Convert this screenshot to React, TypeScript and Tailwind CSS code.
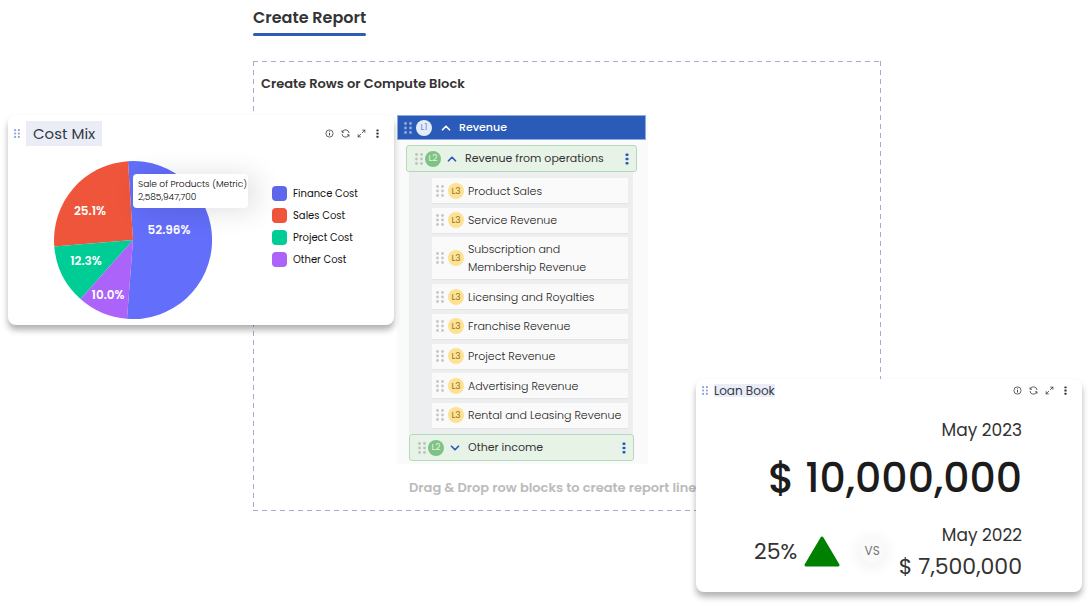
import React from "react";
import { ChevronDown, ChevronUp, Maximize2 } from "lucide-react";

type Slice = {
  name: string;
  swatch: string;
  fill: string;
  path: string;
};

const slices: Slice[] = [
  {
    name: "Finance Cost",
    swatch: "bg-[#5f68ea]",
    fill: "#636efa",
    path: "M79 79 L74 0.2 A79 79 0 1 1 73 157.8 Z",
  },
  {
    name: "Sales Cost",
    swatch: "bg-[#ef553b]",
    fill: "#ef553b",
    path: "M79 79 L0.3 85.5 A79 79 0 0 1 74 0.2 Z",
  },
  {
    name: "Project Cost",
    swatch: "bg-[#00cc96]",
    fill: "#00cc96",
    path: "M79 79 L26.5 138 A79 79 0 0 1 0.3 85.5 Z",
  },
  {
    name: "Other Cost",
    swatch: "bg-[#ab63fa]",
    fill: "#ab63fa",
    path: "M79 79 L73 157.8 A79 79 0 0 1 26.5 138 Z",
  },
];

const pieLabels = [
  { text: "52.96%", x: 115, y: 73 },
  { text: "25.1%", x: 36, y: 54 },
  { text: "12.3%", x: 32, y: 104 },
  { text: "10.0%", x: 54, y: 138 },
];

const operations = [
  "Product Sales",
  "Service Revenue",
  "Subscription and Membership Revenue",
  "Licensing and Royalties",
  "Franchise Revenue",
  "Project Revenue",
  "Advertising Revenue",
  "Rental and Leasing Revenue",
];

function DragDots({ className }: { className: string }) {
  return (
    <svg
      viewBox="0 0 8 12"
      fill="currentColor"
      aria-hidden="true"
      className={`shrink-0 ${className}`}
    >
      {[1.5, 6, 10.5].map((y) => (
        <React.Fragment key={y}>
          <circle cx="1.5" cy={y} r="1.4" />
          <circle cx="6.5" cy={y} r="1.4" />
        </React.Fragment>
      ))}
    </svg>
  );
}

function MoreDots({ className }: { className: string }) {
  return (
    <svg
      viewBox="0 0 4 12"
      fill="currentColor"
      aria-hidden="true"
      className={className}
    >
      <rect x="0.5" y="0.5" width="3" height="2.6" rx="0.8" />
      <rect x="0.5" y="4.7" width="3" height="2.6" rx="0.8" />
      <rect x="0.5" y="8.9" width="3" height="2.6" rx="0.8" />
    </svg>
  );
}

function CardActions() {
  return (
    <div className="flex items-center gap-[7px] text-[#333]">
      <button aria-label="Info">
        <svg viewBox="0 0 18 18" fill="none" className="size-[9px]">
          <circle cx="9" cy="9" r="7.2" stroke="currentColor" strokeWidth="1.5" />
          <path d="M9 8v5M9 4.8v1.7" stroke="currentColor" strokeWidth="1.8" />
        </svg>
      </button>
      <button aria-label="Refresh">
        <svg
          viewBox="0 0 18 18"
          fill="none"
          stroke="currentColor"
          strokeWidth="1.5"
          className="size-[9px]"
        >
          <path d="M2 2.5V6.5H6M2.4 6.3A7 7 0 0 1 16 8.2" />
          <path d="M16 15.5V11.5H12M15.6 11.7A7 7 0 0 1 2 9.8" />
        </svg>
      </button>
      <button aria-label="Expand">
        <Maximize2 className="size-[9px]" strokeWidth={2} />
      </button>
      <button aria-label="More" className="flex w-[9px] justify-center">
        <MoreDots className="h-[9px] w-[3px]" />
      </button>
    </div>
  );
}

function CostMixCard() {
  return (
    <section className="absolute left-2 top-[115px] h-[210px] w-[386px] rounded-lg bg-white pl-[6px] pr-3 pt-[6px] shadow-[0_5px_6px_rgba(0,0,0,0.3)]">
      <header className="flex items-center justify-between">
        <div className="flex items-center gap-[6px]">
          <DragDots className="h-[9px] w-[6px] text-[#8ea0d6]" />
          <h2 className="bg-[#eaedf5] px-[7px] text-[15px] leading-[25px] text-[#333a45]">
            Cost Mix
          </h2>
        </div>
        <CardActions />
      </header>

      <div className="flex pl-10 pt-[15px]">
        <div className="relative">
          <svg
            viewBox="0 0 158 158"
            role="img"
            aria-label="Cost Mix"
            className="size-[158px]"
          >
            {slices.map((slice) => (
              <path key={slice.name} d={slice.path} fill={slice.fill} />
            ))}
            {pieLabels.map((label) => (
              <text
                key={label.text}
                x={label.x}
                y={label.y}
                textAnchor="middle"
                className="fill-white text-[12px] font-semibold"
              >
                {label.text}
              </text>
            ))}
          </svg>
          <div className="absolute left-[79px] top-[13px] w-[115px] whitespace-nowrap rounded-[4px] bg-white px-[5px] py-1 text-[9px] font-light leading-[13px] text-black shadow-[8px_2px_28px_rgba(0,0,0,0.13)]">
            <p>Sale of Products (Metric)</p>
            <p>2,585,947,700</p>
          </div>
        </div>

        <ul className="ml-[60px] mt-[25px] flex flex-col gap-[7px]">
          {slices.map((slice) => (
            <li
              key={slice.name}
              className="flex items-center gap-[6px] text-[10px] leading-[15px] text-[#111]"
            >
              <span className={`size-[15px] rounded-[4px] ${slice.swatch}`} />
              {slice.name}
            </li>
          ))}
        </ul>
      </div>
    </section>
  );
}

function LevelTwoRow({ name, open }: { name: string; open: boolean }) {
  const Chevron = open ? ChevronUp : ChevronDown;

  return (
    <div className="flex h-[27px] items-center rounded-[3px] border border-[#b3d9bd] bg-[#e8f3e8] pl-2 pr-[7px] text-[11px] text-[#333]">
      <DragDots className="h-3 w-2 text-[#bcc3bd]" />
      <span className="ml-[2px] flex size-4 items-center justify-center rounded-full bg-[#7fc384] text-[9px] text-[#e3f5e3]">
        L2
      </span>
      <button
        aria-label={open ? "Collapse" : "Expand"}
        className="ml-1 text-[#2a5bb8]"
      >
        <Chevron className="size-[14px]" strokeWidth={3} />
      </button>
      <span className="ml-[6px] flex-1">{name}</span>
      <button aria-label="More" className="text-[#2a5bb8]">
        <MoreDots className="h-3 w-1" />
      </button>
    </div>
  );
}

function ReportRows() {
  return (
    <div className="ml-[144px] mt-[21px] w-[251px] bg-[#fafafa] pb-[3px]">
      <div className="mr-[2px] flex h-[25px] items-center border border-[#8fabe0] bg-[#2a5bb8] pl-[6px] text-[11px] font-medium text-white">
        <DragDots className="h-3 w-2 text-[#8fabe0]" />
        <span className="ml-1 flex size-4 items-center justify-center rounded-full bg-[#e6edfa] text-[9px] font-normal text-[#6c8fd0]">
          L1
        </span>
        <button aria-label="Collapse" className="ml-[7px]">
          <ChevronUp className="size-[14px]" strokeWidth={3} />
        </button>
        <span className="ml-[6px]">Revenue</span>
      </div>

      <div className="ml-[9px] mr-[11px] mt-[5px]">
        <LevelTwoRow name="Revenue from operations" open />
      </div>

      <div className="ml-3 mr-[15px] bg-[#eceef0] py-[6px] pl-[23px] pr-[5px]">
        <ul className="flex h-[250px] flex-col justify-between">
          {operations.map((name) => (
            <li
              key={name}
              className="flex min-h-[25px] items-center bg-[#fafafa] px-1 py-[3px] text-[11px] font-light leading-[18px] text-[#222] shadow-[0_1px_1px_rgba(0,0,0,0.04)]"
            >
              <DragDots className="h-3 w-2 text-[#c6c6c6]" />
              <span className="ml-1 flex size-4 shrink-0 items-center justify-center rounded-full bg-[#fde293] text-[9px] font-normal text-[#96752a]">
                L3
              </span>
              <span
                className={
                  name.length > 30 ? "ml-1 w-[130px]" : "ml-1 whitespace-nowrap"
                }
              >
                {name}
              </span>
            </li>
          ))}
        </ul>
      </div>

      <div className="ml-3 mr-[14px]">
        <LevelTwoRow name="Other income" open={false} />
      </div>
    </div>
  );
}

function LoanBookCard() {
  return (
    <section className="absolute right-[9px] top-[379px] h-[213px] w-[386px] rounded-lg bg-white pl-[6px] pr-3 pt-[5px] text-[#333] shadow-[0_5px_6px_rgba(0,0,0,0.3)]">
      <header className="flex items-center justify-between">
        <div className="flex items-center gap-[6px]">
          <DragDots className="h-[9px] w-[6px] text-[#8ea0d6]" />
          <h2 className="bg-[#eaedf8] text-[12px] leading-[13px] text-[#333a45]">
            Loan Book
          </h2>
        </div>
        <CardActions />
      </header>

      <div className="pr-12 text-right">
        <p className="mt-[21px] text-[17px] leading-6">May 2023</p>
        <p className="mt-2 text-[41px] font-medium leading-[56px] text-[#1c1c1c]">
          $ 10,000,000
        </p>
        <div className="mt-[13px] flex items-center justify-between pl-[52px]">
          <div className="flex items-center">
            <span className="text-[22px]">25%</span>
            <svg
              viewBox="0 0 36 31"
              aria-label="Up"
              className="ml-[7px] h-[31px] w-9"
            >
              <path
                d="M18 2 L34 29 H2 Z"
                fill="#008000"
                stroke="#008000"
                strokeWidth="3"
                strokeLinejoin="round"
              />
            </svg>
            <span className="ml-5 flex size-6 items-center justify-center rounded-full bg-[#fafafa] text-[12px] text-[#777] shadow-[0_2px_12px_6px_rgba(0,0,0,0.04)]">
              VS
            </span>
          </div>
          <div>
            <p className="text-[17px] leading-8">May 2022</p>
            <p className="text-[22px] leading-8">$ 7,500,000</p>
          </div>
        </div>
      </div>
    </section>
  );
}

export default function App() {
  return (
    <main className="relative min-h-screen overflow-hidden bg-white pb-24 pl-[253px] pr-[210px] pt-[6px] font-['Poppins','Inter',sans-serif]">
      <h1 className="inline-block text-[16px] font-semibold leading-6 text-[#333]">
        Create Report
        <span className="mt-[3px] block h-[3px] rounded-full bg-[#2f5cb5]" />
      </h1>

      <section className="mt-[25px] h-[450px] bg-[linear-gradient(90deg,#a6aacf_5px,transparent_5px),linear-gradient(90deg,#a6aacf_5px,transparent_5px),linear-gradient(#a6aacf_5px,transparent_5px),linear-gradient(#a6aacf_5px,transparent_5px)] bg-[size:9px_1px,9px_1px,1px_9px,1px_9px] bg-[position:0_0,0_100%,0_0,100%_0] [background-repeat:repeat-x,repeat-x,repeat-y,repeat-y]">
        <h2 className="pl-2 pt-[13px] text-[13px] font-semibold leading-5 text-[#333]">
          Create Rows or Compute Block
        </h2>
        <ReportRows />
        <p className="ml-[156px] mt-[14px] whitespace-nowrap text-[13px] font-semibold leading-5 text-[#bbb]">
          Drag &amp; Drop row blocks to create report line items
        </p>
      </section>

      <CostMixCard />
      <LoanBookCard />
    </main>
  );
}
